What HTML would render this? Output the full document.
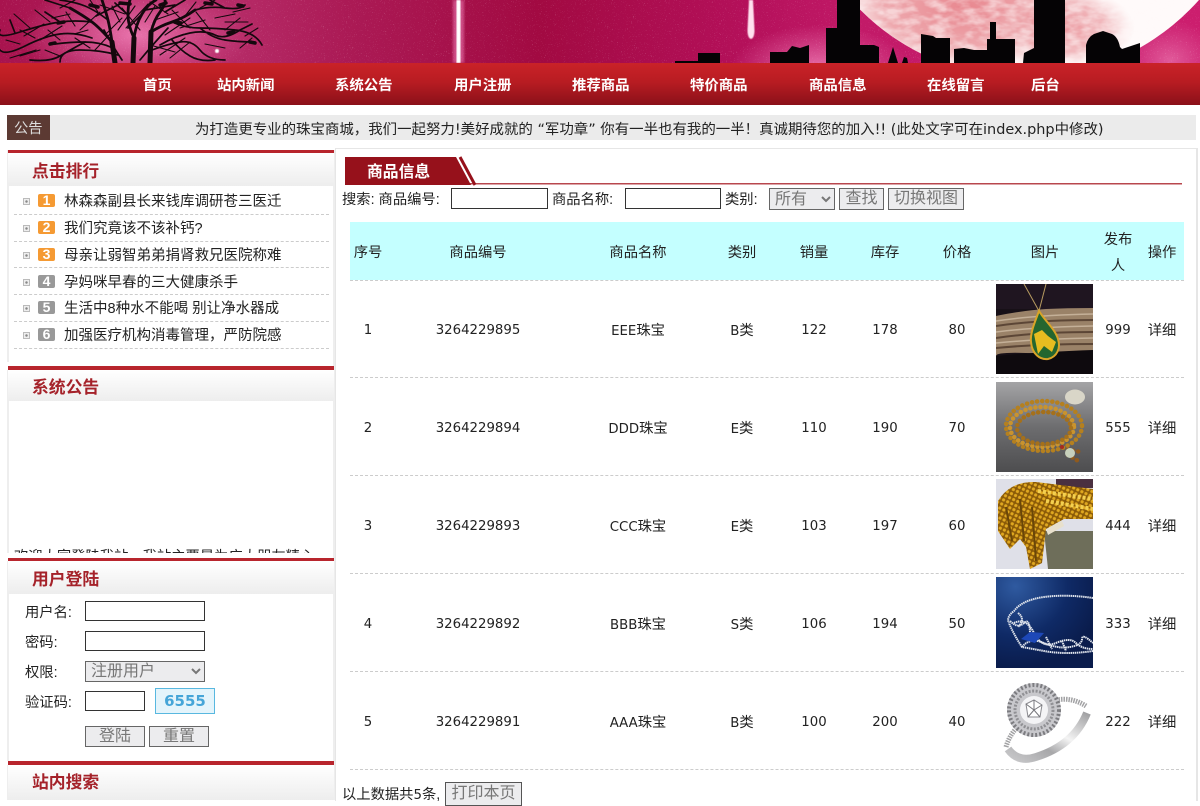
<!DOCTYPE html>
<html lang="zh-CN">
<head>
<meta charset="utf-8">
<title>珠宝商城 - 商品信息</title>
<style>
html,body{margin:0;padding:0;background:#fff}
body{width:1200px;height:800px;overflow:hidden;position:relative;font-family:"DejaVu Sans","Noto Sans CJK SC",sans-serif;font-size:14px;color:#222;filter:blur(.3px)}
.a{position:absolute;display:block}
.t{position:absolute;white-space:nowrap;line-height:20px;height:20px;margin-top:-9px;font-family:"Liberation Sans","Noto Sans CJK SC",sans-serif;font-size:14.3px}
.l{font-size:14.5px}
.c{transform:translateX(-50%)}
.n{font-family:"DejaVu Sans","Noto Sans CJK SC",sans-serif;font-size:13.3px;color:#222}
.nav{color:#fff;font-weight:700;font-size:14.4px;top:85px}
.h{color:#a5222a;font-weight:700;font-size:16.8px}
.red{position:absolute;left:8px;width:326px;height:4px;background:#b8252d}
.hg{position:absolute;left:8px;width:326px;height:33px;background:linear-gradient(#fff,#ededed)}
.side{position:absolute;width:2px;background:#eee}
.d{position:absolute;left:14px;width:315px;border-top:1px dashed #ccc}
.b{position:absolute;left:23px;width:5px;height:5px;border:1px solid #bbb;background:radial-gradient(#888 30%,#eee 40%)}
.bd{position:absolute;left:38px;width:17px;height:13px;border-radius:2px;color:#fff;font:700 14px/13px "Liberation Sans",sans-serif;text-align:center}
input,button,select{position:absolute;box-sizing:border-box;margin:0;padding:0;font-family:"Liberation Sans","Noto Sans CJK SC",sans-serif}
input{background:#fff;border:1.5px solid #333}
button,select{font-size:16px;color:#777;background:#ececee;border:1.5px solid #666}
button{line-height:16px;padding:0}
.dash{position:absolute;left:350px;width:834px;border-top:1px dashed #ccc}
svg{position:absolute;display:block}
</style>
</head>
<body>

<!-- banner -->
<svg style="left:0;top:0" width="1200" height="63" viewBox="0 0 1200 63">
<defs>
<linearGradient id="sky" x1="0" x2="1" y1="0" y2="0">
<stop offset="0" stop-color="#a8134e"/><stop offset=".2" stop-color="#b52a66"/><stop offset=".29" stop-color="#ab1a55"/><stop offset=".45" stop-color="#a20a42"/><stop offset=".62" stop-color="#b4105a"/><stop offset=".72" stop-color="#c21a68"/><stop offset="1" stop-color="#cc1e6e"/>
</linearGradient>
<radialGradient id="glow"><stop offset="0" stop-color="#ec78b0" stop-opacity=".95"/><stop offset="1" stop-color="#e668a8" stop-opacity="0"/></radialGradient>
<radialGradient id="pink"><stop offset="0" stop-color="#e8868e"/><stop offset=".6" stop-color="#eca0a6" stop-opacity=".9"/><stop offset="1" stop-color="#f6d2d4" stop-opacity="0"/></radialGradient>
<clipPath id="moon"><circle cx="1025" cy="-155" r="233"/></clipPath>
<filter id="st" x="0" y="0" width="100%" height="100%"><feTurbulence type="fractalNoise" baseFrequency=".9" numOctaves="2" seed="4"/><feColorMatrix values="0 0 0 0 1 0 0 0 0 .8 0 0 0 0 .9 1.6 1.6 0 0 -1.95"/></filter>
<filter id="cl" x="0" y="0" width="100%" height="100%"><feTurbulence type="fractalNoise" baseFrequency=".06 .12" numOctaves="3" seed="8"/><feColorMatrix values="0 0 0 0 1 0 0 0 0 .96 0 0 0 0 .96 2.500 0 0 0 -.9"/></filter>
<filter id="bl"><feGaussianBlur stdDeviation="1.4"/></filter>
<filter id="bl2"><feGaussianBlur stdDeviation=".4"/></filter>
</defs>
<rect width="1200" height="63" fill="url(#sky)"/>
<ellipse cx="135" cy="35" rx="115" ry="55" fill="url(#glow)"/>
<ellipse cx="820" cy="70" rx="90" ry="45" fill="url(#glow)"/>
<ellipse cx="1170" cy="60" rx="50" ry="40" fill="url(#glow)" opacity=".7"/>
<rect width="1200" height="63" filter="url(#st)" opacity=".6"/>
<circle cx="1025" cy="-155" r="233" fill="#fffafa"/>
<g clip-path="url(#moon)">
<ellipse cx="965" cy="8" rx="135" ry="66" fill="url(#pink)"/>
<ellipse cx="1065" cy="28" rx="70" ry="40" fill="url(#pink)" opacity=".8"/>
<rect x="850" width="350" height="63" filter="url(#cl)" opacity=".55"/>
</g>
<rect x="453" width="11" height="63" fill="#ff9ad0" opacity=".45" filter="url(#bl)"/>
<rect x="456.500" width="4" height="63" fill="#fff" filter="url(#bl2)"/>
<path d="M749 0h4l1.500 30q0 8-3.500 9-3.500-1-3.500-9z" fill="#ffe0ee" filter="url(#bl2)"/>
<circle cx="217" cy="51" r="2" fill="#fff" filter="url(#bl2)"/>
<g fill="none" stroke="#14080d" stroke-linecap="round">
<path stroke-width="5" d="M115 63 112 42M133 63 134 38M150 63 151 32"/>
<path stroke-width="2.800" d="M112 42Q110 28 108 20T102 0M112 42Q100 28 92 22T70 8M134 38Q128 25 128 15T130 0M134 38Q136 24 142 14T156 0M151 32Q154 20 160 12T165 0M151 32Q160 26 172 22T195 10"/>
<path stroke-width="1.700" d="M92 22Q75 20 60 22T20 32 0 30M70 8 45 0M108 20Q95 10 85 6T60 0M92 38Q75 32 60 34T25 46 0 50M113 48Q100 42 85 42T55 44M85 42Q70 50 60 56T30 60M118 55Q100 50 80 50T60 62M15 33 10 20M128 15 115 3M142 14 128 28M172 22Q185 28 200 28T235 30 262 45M195 10Q210 6 225 8T245 5M200 28Q212 38 225 40T255 42M160 45Q175 36 190 33T215 35 240 30M152 50Q168 44 180 42T200 50 225 60M165 12 185 0M225 8 210 0M240 30 252 24M60 22 45 12M172 40Q180 50 190 56T215 60M122 60Q112 45 104 30M140 60Q155 42 168 28M145 10 175 5M96 16 120 4"/>
<path stroke-width="1.100" d="M30 28 14 14M50 22 35 10M75 26 66 12M98 12 90 0M120 22 112 6M145 22 155 6M185 16 196 2M215 18 235 14M225 30 240 18M245 36 258 28M20 44 6 40M40 50 20 56M88 30 74 34M205 44 225 48M180 28 205 20M35 38 20 30M60 40 48 30M233 12 250 8M60 56 45 50M70 14 52 18M80 30 100 12M105 35 122 18M140 30 122 8M165 35 190 18M190 28 172 10M210 30 196 12M252 38 240 48M190 42 170 58M40 40 62 26M24 36 44 24M10 58 36 50M225 22 248 22M200 8 215 0M60 8 75 0M150 45 175 52M118 30 135 6M126 28 148 4M100 5 125 14M155 20 178 12M168 14 150 2M75 38 90 48M95 50 110 34M160 55 185 38"/>
<path stroke-width="3.500" d="M58 23l6-1M175 22l6 1M50 44l5-1M228 33l6-1M250 42l5 1M238 5l5 1M205 3l7 1M160 5l6-2M120 3l10 1M90 5l8 2"/>
</g>
<g fill="#050305">
<path d="M675 63v-2h23v-8h22v10z"/>
<path d="M770 63V52h17l5-6 8 2 9-3v18z"/>
<path d="M826 63V28h11V0h23v45h14l5 2v16z"/>
<path d="M888 63l5-16 5 16zM902 63l2-6 3 1 1 5z"/>
<path d="M921 63V34l12 2 3 2h14v25z"/>
<path d="M954 63V49l10-1 10 2h13v-11h3V22h6v17h19v24z"/>
<path d="M1023 63l1-10 6-3 4-2V0h31v63z"/>
<path d="M1086 63V45q2-8 8-11l9-3 9 3q6 3 8 13l2 2 18-6v20z"/>
</g>
</svg>

<!-- nav -->
<div class="a" style="left:0;top:63px;width:1200px;height:42px;background:linear-gradient(#c92228,#b81c22 45%,#8a1019)"></div>
<span class="t nav" style="left:143px">首页</span>
<span class="t nav" style="left:217px">站内新闻</span>
<span class="t nav" style="left:335px">系统公告</span>
<span class="t nav" style="left:454px">用户注册</span>
<span class="t nav" style="left:572px">推荐商品</span>
<span class="t nav" style="left:690px">特价商品</span>
<span class="t nav" style="left:809px">商品信息</span>
<span class="t nav" style="left:927px">在线留言</span>
<span class="t nav" style="left:1031px">后台</span>

<!-- notice -->
<div class="a" style="left:7px;top:115px;width:1189px;height:25px;background:#ebebeb"></div>
<div class="a" style="left:7px;top:115px;width:43px;height:25px;background:#5c3a33"></div>
<span class="t" style="left:14px;top:128px;color:#ddd">公告</span>
<span class="t" style="left:195px;top:129px;color:#222;font-size:14.45px;font-family:'DejaVu Sans','Noto Sans CJK SC',sans-serif">为打造更专业的珠宝商城，我们一起努力!美好成就的 “军功章” 你有一半也有我的一半！真诚期待您的加入!! (此处文字可在index.php中修改)</span>

<!-- left column -->
<div class="side" style="left:7px;top:150px;height:212px"></div>
<div class="side" style="left:333px;top:150px;height:650px"></div>
<div class="side" style="left:7px;top:370px;height:183px"></div>
<div class="side" style="left:7px;top:561px;height:200px"></div>
<div class="side" style="left:7px;top:765px;height:35px"></div>

<div class="red" style="top:150px;height:3px"></div>
<div class="hg" style="top:153px"></div>
<span class="t h" style="left:32px;top:171px">点击排行</span>

<i class="b" style="top:198px"></i><i class="bd" style="top:194px;background:#f59a33">1</i><span class="t l" style="left:64px;top:201px">林森森副县长来钱库调研苍三医迁</span><div class="d" style="top:214px"></div>
<i class="b" style="top:225px"></i><i class="bd" style="top:221px;background:#f59a33">2</i><span class="t l" style="left:64px;top:228px">我们究竟该不该补钙?</span><div class="d" style="top:241px"></div>
<i class="b" style="top:252px"></i><i class="bd" style="top:248px;background:#f59a33">3</i><span class="t l" style="left:64px;top:255px">母亲让弱智弟弟捐肾救兄医院称难</span><div class="d" style="top:267px"></div>
<i class="b" style="top:279px"></i><i class="bd" style="top:275px;background:#999">4</i><span class="t l" style="left:64px;top:282px">孕妈咪早春的三大健康杀手</span><div class="d" style="top:294px"></div>
<i class="b" style="top:305px"></i><i class="bd" style="top:301px;background:#999">5</i><span class="t l" style="left:64px;top:308px">生活中8种水不能喝 别让净水器成</span><div class="d" style="top:321px"></div>
<i class="b" style="top:332px"></i><i class="bd" style="top:328px;background:#999">6</i><span class="t l" style="left:64px;top:335px">加强医疗机构消毒管理，严防院感</span><div class="d" style="top:348px"></div>

<div class="red" style="top:366px"></div>
<div class="hg" style="top:370px;height:31px"></div>
<span class="t h" style="left:32px;top:387px">系统公告</span>

<div class="a" style="left:14px;top:546px;width:318px;height:7px;overflow:hidden"><span class="t" style="left:0;top:10px">欢迎大家登陆我站，我站主要是为广大朋友精心</span></div>

<div class="red" style="top:558px;height:3px"></div>
<div class="hg" style="top:561px"></div>
<span class="t h" style="left:32px;top:579px">用户登陆</span>

<span class="t" style="left:25px;top:612px">用户名:</span>
<input type="text" style="left:85px;top:601px;width:120px;height:20px">
<span class="t" style="left:25px;top:642px">密码:</span>
<input type="text" style="left:85px;top:631px;width:120px;height:20px">
<span class="t" style="left:25px;top:672px">权限:</span>
<select style="left:85px;top:661px;width:120px;height:21px;padding-left:1px"><option>注册用户</option></select>
<span class="t" style="left:25px;top:702px">验证码:</span>
<input type="text" style="left:85px;top:691px;width:60px;height:20px">
<div class="a" style="left:155px;top:688px;width:58px;height:24px;border:1px solid #58b8e0;background:#e4f4fb;color:#45a5d8;font:700 15px/25px 'DejaVu Sans',sans-serif;text-align:center">6555</div>
<button style="left:85px;top:726px;width:60px;height:21px">登陆</button>
<button style="left:149px;top:726px;width:60px;height:21px">重置</button>

<div class="red" style="top:761px"></div>
<div class="hg" style="top:765px;height:35px"></div>
<span class="t h" style="left:32px;top:782px">站内搜索</span>

<!-- right panel -->
<div class="a" style="left:335px;top:148px;width:860px;height:652px;border:1px solid #e6e6e6;border-bottom:0;border-right-width:2px"></div>
<svg style="left:345px;top:155px" width="840" height="32" viewBox="0 0 840 32">
<rect x="0" y="28" width="837" height="1.500" fill="#b8474e"/>
<path d="M0 2H111L126 30H0z" fill="#96111b"/>
<path d="M115 2 130 30" stroke="#96111b" stroke-width="3" fill="none"/>
</svg>
<span class="t" style="left:367px;top:172px;color:#fff;font-weight:700;font-size:15.800px">商品信息</span>

<span class="t" style="left:342px;top:199px">搜索: 商品编号:</span>
<input type="text" style="left:451px;top:188px;width:97px;height:21px">
<span class="t" style="left:552px;top:199px">商品名称:</span>
<input type="text" style="left:625px;top:188px;width:96px;height:21px">
<span class="t" style="left:725px;top:199px">类别:</span>
<select style="left:769px;top:188px;width:66px;height:22px;padding-left:1px"><option>所有</option></select>
<button style="left:839px;top:188px;width:45px;height:22px">查找</button>
<button style="left:888px;top:188px;width:76px;height:22px">切换视图</button>

<!-- table -->
<div class="a" style="left:350px;top:222px;width:834px;height:58px;background:#c4ffff"></div>
<span class="t c" style="left:368px;top:252px">序号</span>
<span class="t c" style="left:478px;top:252px">商品编号</span>
<span class="t c" style="left:638px;top:252px">商品名称</span>
<span class="t c" style="left:742px;top:252px">类别</span>
<span class="t c" style="left:814px;top:252px">销量</span>
<span class="t c" style="left:885px;top:252px">库存</span>
<span class="t c" style="left:957px;top:252px">价格</span>
<span class="t c" style="left:1045px;top:252px">图片</span>
<span class="t c" style="left:1118px;top:239px">发布</span>
<span class="t c" style="left:1118px;top:265px">人</span>
<span class="t c" style="left:1162px;top:252px">操作</span>
<div class="dash" style="top:280px"></div>
<div class="dash" style="top:377px"></div>
<div class="dash" style="top:475px"></div>
<div class="dash" style="top:573px"></div>
<div class="dash" style="top:671px"></div>
<div class="dash" style="top:769px"></div>

<!-- row 1 -->
<span class="t c n" style="left:368px;top:330px">1</span><span class="t c n" style="left:478px;top:330px">3264229895</span><span class="t c" style="left:638px;top:330px"><span class="n">EEE</span>珠宝</span><span class="t c" style="left:742px;top:330px"><span class="n">B</span>类</span><span class="t c n" style="left:814px;top:330px">122</span><span class="t c n" style="left:885px;top:330px">178</span><span class="t c n" style="left:957px;top:330px">80</span><span class="t c n" style="left:1118px;top:330px">999</span><span class="t c" style="left:1162px;top:330px">详细</span>
<!-- row 2 -->
<span class="t c n" style="left:368px;top:428px">2</span><span class="t c n" style="left:478px;top:428px">3264229894</span><span class="t c" style="left:638px;top:428px"><span class="n">DDD</span>珠宝</span><span class="t c" style="left:742px;top:428px"><span class="n">E</span>类</span><span class="t c n" style="left:814px;top:428px">110</span><span class="t c n" style="left:885px;top:428px">190</span><span class="t c n" style="left:957px;top:428px">70</span><span class="t c n" style="left:1118px;top:428px">555</span><span class="t c" style="left:1162px;top:428px">详细</span>
<!-- row 3 -->
<span class="t c n" style="left:368px;top:526px">3</span><span class="t c n" style="left:478px;top:526px">3264229893</span><span class="t c" style="left:638px;top:526px"><span class="n">CCC</span>珠宝</span><span class="t c" style="left:742px;top:526px"><span class="n">E</span>类</span><span class="t c n" style="left:814px;top:526px">103</span><span class="t c n" style="left:885px;top:526px">197</span><span class="t c n" style="left:957px;top:526px">60</span><span class="t c n" style="left:1118px;top:526px">444</span><span class="t c" style="left:1162px;top:526px">详细</span>
<!-- row 4 -->
<span class="t c n" style="left:368px;top:624px">4</span><span class="t c n" style="left:478px;top:624px">3264229892</span><span class="t c" style="left:638px;top:624px"><span class="n">BBB</span>珠宝</span><span class="t c" style="left:742px;top:624px"><span class="n">S</span>类</span><span class="t c n" style="left:814px;top:624px">106</span><span class="t c n" style="left:885px;top:624px">194</span><span class="t c n" style="left:957px;top:624px">50</span><span class="t c n" style="left:1118px;top:624px">333</span><span class="t c" style="left:1162px;top:624px">详细</span>
<!-- row 5 -->
<span class="t c n" style="left:368px;top:722px">5</span><span class="t c n" style="left:478px;top:722px">3264229891</span><span class="t c" style="left:638px;top:722px"><span class="n">AAA</span>珠宝</span><span class="t c" style="left:742px;top:722px"><span class="n">B</span>类</span><span class="t c n" style="left:814px;top:722px">100</span><span class="t c n" style="left:885px;top:722px">200</span><span class="t c n" style="left:957px;top:722px">40</span><span class="t c n" style="left:1118px;top:722px">222</span><span class="t c" style="left:1162px;top:722px">详细</span>

<!-- product 1: pendant -->
<svg style="left:996px;top:284px" width="97" height="90" viewBox="0 0 97 90">
<rect width="97" height="90" fill="#171017"/>
<rect width="97" height="25" fill="#1f1520"/>
<path d="M0 32Q30 26 50 25T97 24V67Q60 70 30 69T0 72z" fill="#9a8268"/>
<path d="M0 42Q40 36 97 36M0 54Q40 48 97 48M0 64Q40 60 97 60" stroke="#5c4636" stroke-width="2" fill="none"/>
<path d="M0 37Q40 31 97 30M0 48Q40 43 97 42M0 59Q40 55 97 54" stroke="#c4b098" stroke-width="1.500" fill="none"/>
<path d="M0 72Q40 68 97 66V90H0z" fill="#0e0a0e"/>
<path d="M28 0 43 27 50 0" stroke="#b69a60" stroke-width="1" fill="none"/>
<path d="M43 27C38 40 34 50 35 58C36 70 44 76 52 75C61 73 65 64 62 55C59 45 49 37 43 27z" fill="#24662f" stroke="#d9a428" stroke-width="2"/>
<path d="M38 50 46 46 52 52 60 58 56 68 48 62 42 70 40 60z" fill="#e6bc20"/>
</svg>

<!-- product 2: beads -->
<svg style="left:996px;top:382px" width="97" height="90" viewBox="0 0 97 90">
<defs><linearGradient id="g2" x1="0" x2="0" y1="0" y2="1"><stop offset="0" stop-color="#a4a4a6"/><stop offset=".5" stop-color="#6d6d6f"/><stop offset="1" stop-color="#4d4d4f"/></linearGradient></defs>
<rect width="97" height="90" fill="url(#g2)"/>
<ellipse cx="79" cy="15" rx="10" ry="7.500" fill="#d9d6c8"/>
<g fill="none" stroke-linecap="round" stroke-dasharray=".1 5" stroke-width="4.500">
<ellipse cx="48" cy="44" rx="38" ry="25" stroke="#b5801f"/>
<ellipse cx="46" cy="45" rx="32" ry="20" stroke="#c9932e"/>
<ellipse cx="48" cy="46" rx="27" ry="16" stroke="#a5701b"/>
<path d="M72 68 86 70M72 73 84 80" stroke="#8f5a1e"/>
</g>
<circle cx="74" cy="71" r="5" fill="#c7d0bc"/>
<circle cx="66" cy="65" r="2" fill="#a62a20"/>
</svg>

<!-- product 3: gold chains -->
<svg style="left:996px;top:479px" width="97" height="90" viewBox="0 0 97 90">
<defs><pattern id="gd" width="4.500" height="4.500" patternUnits="userSpaceOnUse" patternTransform="rotate(25)"><rect width="4.500" height="4.500" fill="#8a5a08"/><circle cx="2.200" cy="2.200" r="1.600" fill="#e0a820"/></pattern></defs>
<rect width="97" height="90" fill="#dfe0e8"/>
<rect x="60" width="37" height="9" fill="#4a3040"/>
<path d="M48 52H97V90H52z" fill="#6e6e5a"/>
<path d="M50 50 66 42 68 47 52 56z" fill="#e8e0cc"/>
<path d="M2 22Q14 2 40 3L97 10V40L68 40 50 50 46 84 34 90 30 68 24 60 14 70 2 52z" fill="url(#gd)"/>
<path d="M10 28 16 62M24 20 28 62M36 28 40 82" stroke="#6a4607" stroke-width="2" fill="none"/>
<path d="M42 12 97 20M50 22 97 30" stroke="#f4d050" stroke-width="4" stroke-dasharray="3 2" fill="none"/>
</svg>

<!-- product 4: necklace -->
<svg style="left:996px;top:577px" width="97" height="91" viewBox="0 0 97 91">
<defs><radialGradient id="g4" cx=".2" cy=".1" r=".9"><stop offset="0" stop-color="#2f5aa0"/><stop offset=".6" stop-color="#0f2a66"/><stop offset="1" stop-color="#0a1c4c"/></radialGradient></defs>
<rect width="97" height="91" fill="url(#g4)"/>
<g fill="none" stroke="#dfe4ec" stroke-width="2" stroke-dasharray="1.500 .6">
<path d="M97 21Q70 17 48 20T18 34Q10 40 13 46"/>
<path d="M97 74Q70 78 48 74T26 70Q18 58 13 46"/>
<path d="M18 46Q30 40 38 56T60 66 80 66 97 72"/>
<path d="M26 70Q34 60 48 66T74 70 86 62 97 66"/>
<path d="M14 44Q22 52 28 46T34 58M22 36Q30 42 22 50M50 60 56 72M66 64 70 74"/>
</g>
<path d="M25 62 34 55 48 56 39 66z" fill="#1d48b8"/>
</svg>

<!-- product 5: ring -->
<svg style="left:996px;top:675px" width="97" height="91" viewBox="0 0 97 91">
<defs><linearGradient id="g5" x1="0" x2="1" y1="1" y2="0"><stop offset="0" stop-color="#c8c8ca"/><stop offset=".35" stop-color="#a8a8aa"/><stop offset=".6" stop-color="#f4f4f4"/><stop offset="1" stop-color="#a0a0a2"/></linearGradient></defs>
<rect width="97" height="91" fill="#fff"/>
<path d="M12 74Q22 88 40 82Q78 70 91 38" stroke="url(#g5)" stroke-width="8" fill="none"/>
<path d="M10 72Q14 58 24 50M60 25Q76 22 90 31" stroke="#a2a2a4" stroke-width="5" stroke-dasharray="1.500 1" fill="none"/>
<circle cx="38" cy="35" r="27" fill="#c8c8cc"/>
<circle cx="38" cy="35" r="25" fill="none" stroke="#7c7c80" stroke-width="4" stroke-dasharray="2 2"/>
<circle cx="38" cy="35" r="19" fill="none" stroke="#909094" stroke-width="3" stroke-dasharray="2 1.500"/>
<circle cx="38" cy="35" r="14" fill="#f4f4f6"/>
<path d="M30 29 38 25 46 30 44 42 32 42z" fill="#fff" stroke="#8b8b90"/>
<path d="M38 25V35L30 29M38 35 46 30M38 35 44 42M38 35 32 42" stroke="#77777c" fill="none"/>
</svg>

<!-- footer -->
<span class="t" style="left:342px;top:794px">以上数据共<span class="n">5</span>条,</span>
<button style="left:445px;top:782px;width:77px;height:24px;border-color:#555">打印本页</button>

</body>
</html>
